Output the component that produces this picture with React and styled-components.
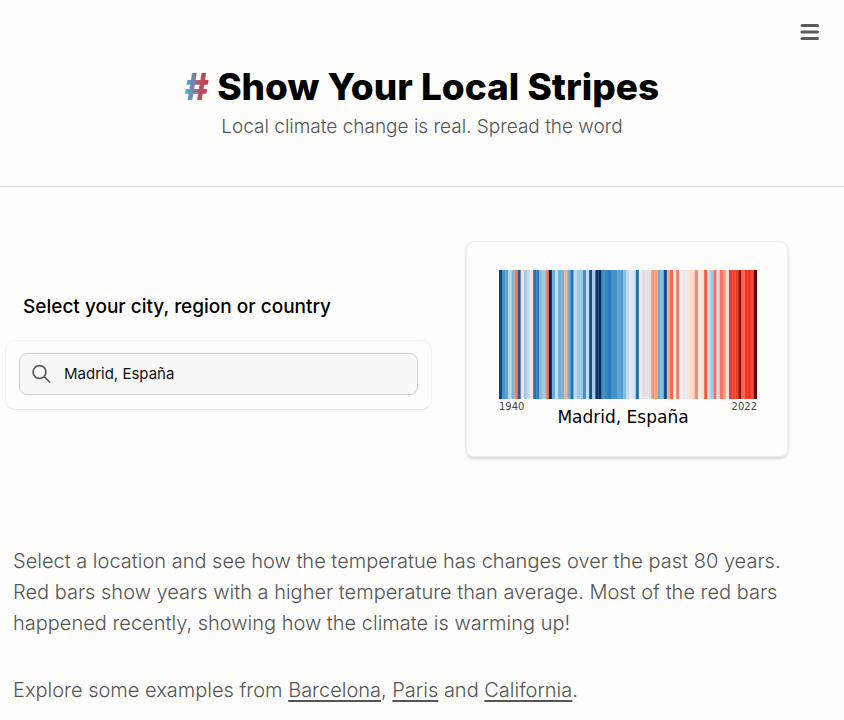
import React from "react";
import styled, { createGlobalStyle } from "styled-components";

const GlobalStyle = createGlobalStyle`
  *, *::before, *::after { box-sizing: border-box; }
  body {
    margin: 0;
    background: #fdfdfb;
    color: #000;
    font-family: Inter, "Liberation Sans", sans-serif;
  }
  h1, p { margin: 0; }
`;

const Header = styled.header`
  display: flex;
  flex-direction: column;
  padding: 20px 22px 45px;
  border-bottom: 1px solid #dcdcd0;
`;

const MenuButton = styled.button`
  align-self: flex-end;
  display: flex;
  padding: 0;
  border: 0;
  background: none;
  color: #5b5b5b;
  cursor: pointer;
`;

const Title = styled.h1`
  margin-top: 18px;
  font-size: 37px;
  line-height: 50px;
  font-weight: 800;
  text-align: center;
`;

const Hash = styled.span`
  background: linear-gradient(90deg, #4aa8dc 10%, #c8414e 75%);
  background-clip: text;
  -webkit-background-clip: text;
  color: transparent;
`;

const Tagline = styled.p`
  margin-top: 1px;
  font-size: 19px;
  line-height: 28px;
  font-weight: 300;
  color: #555;
  text-align: center;
`;

const Columns = styled.main`
  display: grid;
  grid-template-columns: 432fr 412fr;
  align-items: center;
  padding: 54px 0 0;
`;

const Picker = styled.form`
  display: flex;
  flex-direction: column;
  padding: 4px 0 0 5px;
`;

const PickerLabel = styled.label`
  padding-left: 18px;
  font-size: 19px;
  line-height: 28px;
  font-weight: 500;
`;

const SearchPanel = styled.div`
  margin-top: 19px;
  padding: 12px 13px 14px;
  border: 1px solid #f3f3f3;
  border-bottom-color: #e4e4e0;
  border-radius: 10px;
`;

const SearchBox = styled.div`
  display: flex;
  align-items: center;
  gap: 12px;
  height: 42px;
  padding: 0 12px;
  border: 1px solid #d0d0cc;
  border-radius: 8px;
  background: #f8f8f6;
  color: #5b5b5b;
`;

const SearchInput = styled.input`
  flex: 1;
  min-width: 0;
  padding: 0;
  border: 0;
  outline: 0;
  background: none;
  color: #111;
  font: 400 15px/20px Inter, "Liberation Sans", sans-serif;
`;

const StripeCard = styled.figure`
  margin: 0 56px 0 34px;
  padding: 28px 30px 28px 32px;
  border: 1px solid #ececea;
  border-radius: 8px;
  box-shadow: 0 2px 3px rgba(0, 0, 0, 0.16);
  font-family: "DejaVu Sans", sans-serif;
`;

const StripeChart = styled.svg`
  display: block;
  width: 100%;
  height: 129px;
`;

const Years = styled.div`
  display: flex;
  justify-content: space-between;
  height: 8px;
  font-size: 10px;
  line-height: 16px;
  color: #444;
`;

const Place = styled.figcaption`
  padding-right: 10px;
  font-size: 17px;
  line-height: 21px;
  text-align: center;
`;

const Copy = styled.section`
  display: flex;
  flex-direction: column;
  gap: 36px;
  padding: 89px 32px 16px 13px;
  font-size: 20px;
  line-height: 31px;
  font-weight: 300;
  color: #555;
`;

const PlaceLink = styled.a`
  color: inherit;
  text-decoration: underline;
  text-underline-offset: 3px;
`;

const STRIPES = `
08488e 4292c6 5a9fcf bdd7e7 7fb5db f97b5c 2a5a9a fbe0da a5c8e0 c6dbef
fde0d5 2171b5 2b7bba 8bbad8 9ecae1 fa7c5c 08224f 6baed6 c6dbef 6baed6
75b2d8 fcae91 6baed6 2171b5 c0daea 9ecae1 9ecae1 4292c6 c6dbef 08519c
a9cde6 08306b 08285c 3f8dc5 3787c0 2b79ba 4292c6 4292c6 5ca2d2 4c99cb
86bcdd c6dbef deebf7 d2e3f3 2171b5 fbe9e5 d5e2f0 fbdcd4 dcdfea fa9466
fc9f7d 6baed6 8cbfde 08519c fcae81 f96a4a deebf7 f97a62 f4eaf0 e2ecf7
fde3da fee0d2 fdd5c9 f98a75 fdece6 fbe0da f85a3a c6dbef 9ecae1 f8705a
cddcef f6705c fb9a7c e3e0e0 ee3b22 f3432c ef3b20 8e1015 f9684c ee3420
ec301e f24830 67000d`.trim().split(/\s+/);

function App() {
  return (
    <>
      <GlobalStyle />
      <Header>
        <MenuButton type="button" aria-label="Open menu">
          <svg width="24" height="24" viewBox="0 0 24 24" fill="none" stroke="currentColor" strokeWidth="3" strokeLinecap="round">
            <path d="M4 5.5h15.500M4 12h15.500M4 18.500h15.500" />
          </svg>
        </MenuButton>
        <Title><Hash>#</Hash> Show Your Local Stripes</Title>
        <Tagline>Local climate change is real. Spread the word</Tagline>
      </Header>
      <Columns>
        <Picker onSubmit={(event) => event.preventDefault()}>
          <PickerLabel htmlFor="place">Select your city, region or country</PickerLabel>
          <SearchPanel>
            <SearchBox>
              <svg width="20" height="20" viewBox="0 0 20 20" fill="none" stroke="currentColor" strokeWidth="1.7">
                <circle cx="7.5" cy="8" r="6.4" />
                <path d="M12.2 12.7 18 18.5" />
              </svg>
              <SearchInput id="place" type="text" defaultValue="Madrid, España" />
            </SearchBox>
          </SearchPanel>
        </Picker>
        <StripeCard>
          <StripeChart viewBox={`0 0 ${STRIPES.length} 1`} preserveAspectRatio="none" role="img" aria-label="Yearly temperature stripes">
            {STRIPES.map((color, i) => (
              <rect key={i} x={i} width="1.05" height="1" fill={`#${color}`} />
            ))}
          </StripeChart>
          <Years><span>1940</span><span>2022</span></Years>
          <Place>Madrid, España</Place>
        </StripeCard>
      </Columns>
      <Copy>
        <p>
          Select a location and see how the temperatue has changes over the past 80 years.
          Red bars show years with a higher temperature than average. Most of the red bars
          happened recently, showing how the climate is warming up!
        </p>
        <p>
          Explore some examples from <PlaceLink href="#barcelona">Barcelona</PlaceLink>,{" "}
          <PlaceLink href="#paris">Paris</PlaceLink> and{" "}
          <PlaceLink href="#california">California</PlaceLink>.
        </p>
      </Copy>
    </>
  );
}

export default App;
